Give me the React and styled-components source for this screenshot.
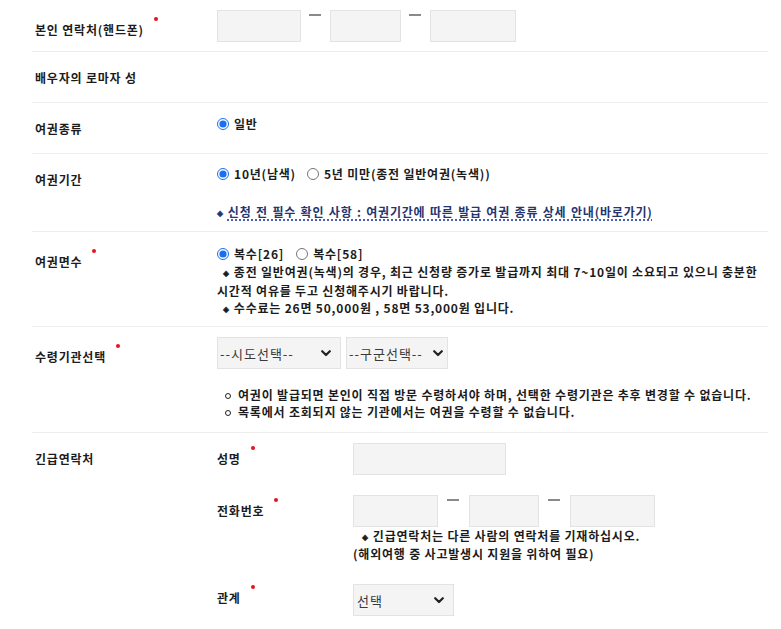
import React from "react";
import styled, { createGlobalStyle } from "styled-components";

const Global = createGlobalStyle`
  html, body { margin: 0; padding: 0; background: #fff; }
  body {
    font-family: "Noto Sans CJK KR", "Noto Sans", sans-serif;
    color: #1c1c1c;
    letter-spacing: 0.8px;
  }
  * { box-sizing: border-box; }
`;

const Form = styled.div`
  margin-left: 32px;
  width: 736px;
`;

const Row = styled.div`
  display: grid;
  grid-template-columns: 185px 1fr;
  min-height: ${(p) => p.$h}px;
  border-bottom: ${(p) => (p.$last ? "none" : "1px solid #ededed")};
`;

const Label = styled.div`
  padding: 17px 0 0 3px;
  font-size: 12px;
  font-weight: 700;
  line-height: 18px;
  white-space: nowrap;
`;

const Req = styled.span`
  display: inline-block;
  width: 4px;
  height: 4px;
  border-radius: 50%;
  background: #e8121e;
  margin-left: 10px;
  vertical-align: 14px;
`;

const Value = styled.div`
  padding-top: ${(p) => p.$pt || 0}px;
  padding-bottom: ${(p) => p.$pb || 0}px;
  font-size: 12px;
  font-weight: 700;
`;

const InputGroup = styled.div`
  display: flex;
  align-items: flex-start;
`;

const TextInput = styled.input`
  display: block;
  width: ${(p) => p.$w}px;
  height: 32px;
  background: #f4f4f4;
  border: 1px solid #e3e3e3;
  border-radius: 0;
  outline: none;
  padding: 0 4px;
  font: inherit;
`;

const Dash = styled.span`
  display: block;
  width: 12px;
  height: 2px;
  background: #8a8a8a;
  margin: 4px ${(p) => p.$r || 9}px 0 ${(p) => p.$l || 8}px;
`;

const RadioLine = styled.div`
  display: flex;
  align-items: center;
  height: 18px;
  line-height: 18px;
  white-space: nowrap;
`;

const RadioOption = styled.label`
  display: inline-flex;
  align-items: center;
  gap: 5px;
  margin-right: ${(p) => p.$mr || 15}px;
  cursor: pointer;
`;

const Radio = styled.input.attrs({ type: "radio" })`
  width: 12px;
  height: 12px;
  margin: 0;
  accent-color: #1a6ff0;
`;

const GuideLink = styled.a`
  display: inline-block;
  margin-top: 20px;
  line-height: 18px;
  color: #25356f;
  text-decoration: underline dotted #4a63b0;
  text-decoration-thickness: 1.5px;
  text-underline-offset: 2px;
  white-space: nowrap;
  word-spacing: 1px;
`;

const Notes = styled.div`
  line-height: ${(p) => p.$lh || 17.5}px;
  margin-top: ${(p) => p.$mt || 0}px;
  padding-left: ${(p) => p.$pl || 0}px;
  white-space: nowrap;
`;

const Mark = styled.span`
  display: inline-block;
  font-size: 8px;
  vertical-align: 1px;
  margin-left: ${(p) => p.$ml || 0}px;
  margin-right: 4px;
`;

const Circle = styled.span`
  display: inline-block;
  width: 6px;
  height: 6px;
  border: 1.5px solid #222;
  border-radius: 50%;
  vertical-align: 1px;
  margin-right: 7px;
`;

const SelectRow = styled.div`
  display: flex;
  gap: 5px;
`;

const SelectWrap = styled.div`
  position: relative;
  width: ${(p) => p.$w}px;
  height: 32px;
`;

const Select = styled.select`
  appearance: none;
  -webkit-appearance: none;
  width: 100%;
  height: 100%;
  background: #f4f4f4;
  border: 1px solid #e3e3e3;
  border-radius: 0;
  padding: 0 ${(p) => p.$pr || 16}px 0 ${(p) => p.$pl || 2}px;
  font-family: "Noto Sans CJK KR", "Noto Sans", sans-serif;
  font-size: 13px;
  font-weight: 400;
  letter-spacing: 1px;
  color: #3a3a3a;
  outline: none;
`;

const Chevron = styled.svg`
  position: absolute;
  right: ${(p) => p.$r}px;
  top: 13px;
  pointer-events: none;
`;

const SubGrid = styled.div`
  display: grid;
  grid-template-columns: 136px 1fr;
  row-gap: 20px;
`;

const SubLabel = styled.div`
  line-height: 32px;
  font-size: 12px;
  font-weight: 700;
  white-space: nowrap;
`;

const SubValue = styled.div`
  margin-top: ${(p) => p.$mt || 0}px;
`;

function ChevronIcon({ r }) {
  return (
    <Chevron $r={r} width="10" height="7" viewBox="0 0 10 7">
      <path d="M1.2 1.2 L5 5 L8.8 1.2" fill="none" stroke="#222" strokeWidth="2.2" strokeLinecap="round" strokeLinejoin="round" />
    </Chevron>
  );
}

function Dropdown({ w, r, pl, options }) {
  return (
    <SelectWrap $w={w}>
      <Select $pl={pl} defaultValue={options[0]}>
        {options.map((o) => (
          <option key={o}>{o}</option>
        ))}
      </Select>
      <ChevronIcon r={r} />
    </SelectWrap>
  );
}

export default function App() {
  return (
    <>
      <Global />
      <Form>
        <Row $h={52}>
          <Label>
            본인 연락처(핸드폰)<Req />
          </Label>
          <Value $pt={10}>
            <InputGroup>
              <TextInput $w={84} />
              <Dash />
              <TextInput $w={71} />
              <Dash />
              <TextInput $w={86} />
            </InputGroup>
          </Value>
        </Row>

        <Row $h={51}>
          <Label>배우자의 로마자 성</Label>
          <Value />
        </Row>

        <Row $h={51}>
          <Label>여권종류</Label>
          <Value $pt={12}>
            <RadioLine>
              <RadioOption>
                <Radio name="kind" defaultChecked />
                일반
              </RadioOption>
            </RadioLine>
          </Value>
        </Row>

        <Row $h={78}>
          <Label>여권기간</Label>
          <Value $pt={11}>
            <RadioLine>
              <RadioOption $mr={11}>
                <Radio name="period" defaultChecked />
                10년(남색)
              </RadioOption>
              <RadioOption>
                <Radio name="period" />
                5년 미만(종전 일반여권(녹색))
              </RadioOption>
            </RadioLine>
            <GuideLink href="#">
              <Mark>◈</Mark>신청 전 필수 확인 사항 : 여권기간에 따른 발급 여권 종류 상세 안내(바로가기)
            </GuideLink>
          </Value>
        </Row>

        <Row $h={95}>
          <Label>
            여권면수<Req />
          </Label>
          <Value $pt={13}>
            <RadioLine>
              <RadioOption $mr={12}>
                <Radio name="pages" defaultChecked />
                복수[26]
              </RadioOption>
              <RadioOption>
                <Radio name="pages" />
                복수[58]
              </RadioOption>
            </RadioLine>
            <Notes>
              <Mark $ml={6}>◈</Mark>종전 일반여권(녹색)의 경우, 최근 신청량 증가로 발급까지 최대 7~10일이 소요되고 있으니 충분한
              <br />
              시간적 여유를 두고 신청해주시기 바랍니다.
              <br />
              <Mark $ml={6}>◈</Mark>수수료는 26면 50,000원 , 58면 53,000원 입니다.
            </Notes>
          </Value>
        </Row>

        <Row $h={106}>
          <Label>
            수령기관선택<Req />
          </Label>
          <Value $pt={10}>
            <SelectRow>
              <Dropdown w={124} r={10} options={["--시도선택--"]} />
              <Dropdown w={102} r={5} options={["--구군선택--"]} />
            </SelectRow>
            <Notes $mt={17} $lh={17} $pl={8}>
              <Circle />여권이 발급되면 본인이 직접 방문 수령하셔야 하며, 선택한 수령기관은 추후 변경할 수 없습니다.
              <br />
              <Circle />목록에서 조회되지 않는 기관에서는 여권을 수령할 수 없습니다.
            </Notes>
          </Value>
        </Row>

        <Row $last>
          <Label>긴급연락처</Label>
          <Value $pt={10}>
            <SubGrid>
              <SubLabel>
                성명<Req />
              </SubLabel>
              <SubValue>
                <TextInput $w={153} />
              </SubValue>

              <SubLabel>
                전화번호<Req />
              </SubLabel>
              <SubValue>
                <InputGroup>
                  <TextInput $w={85} />
                  <Dash $l={9} $r={10} />
                  <TextInput $w={70} />
                  <Dash $l={9} $r={10} />
                  <TextInput $w={85} />
                </InputGroup>
                <Notes $lh={17}>
                  <Mark $ml={9}>◈</Mark>긴급연락처는 다른 사람의 연락처를 기재하십시오.
                  <br />
                  (해외여행 중 사고발생시 지원을 위하여 필요)
                </Notes>
              </SubValue>

              <SubLabel>
                관계<Req />
              </SubLabel>
              <SubValue $mt={2}>
                <Dropdown w={101} r={10} pl={3} options={["선택"]} />
              </SubValue>
            </SubGrid>
          </Value>
        </Row>
      </Form>
    </>
  );
}
